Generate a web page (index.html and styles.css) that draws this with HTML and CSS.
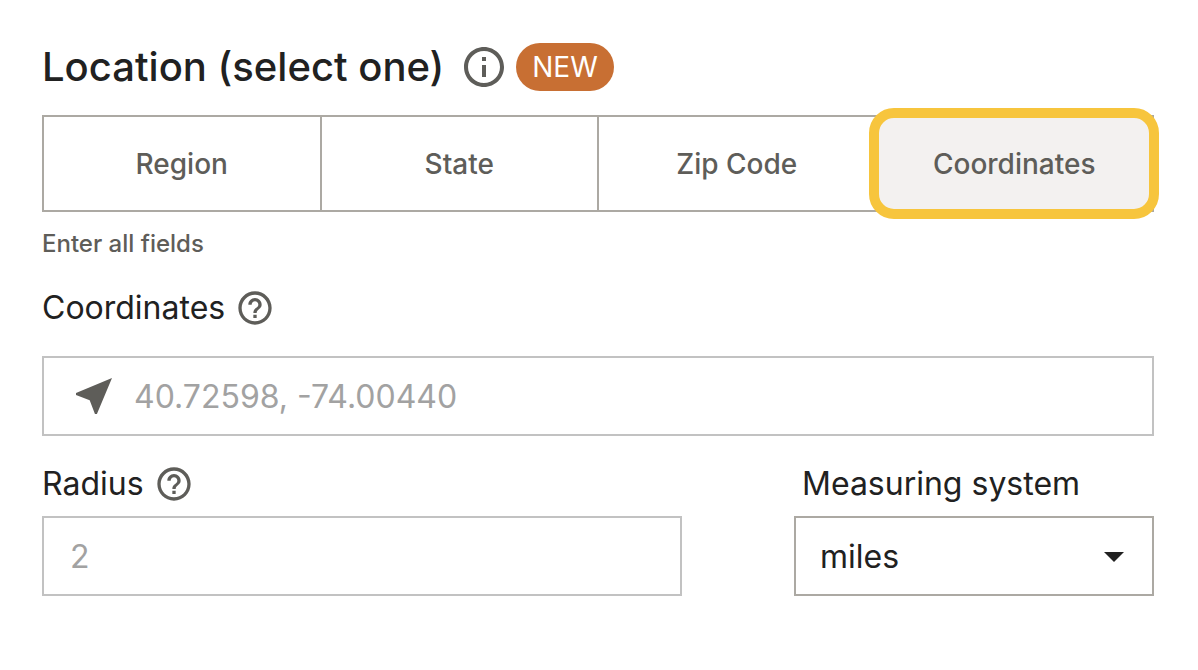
FILE: index.html
```html
<!DOCTYPE html>
<html lang="en">

<head>
    <meta charset="UTF-8">
    <meta name="viewport" content="width=device-width, initial-scale=1.0">
    <title>Location</title>
    <link rel="stylesheet" href="styles.css">
</head>

<body>
    <form class="location">
        <div class="heading">
            <h2 class="title">Location (select one)</h2>
            <button type="button" class="icon-btn" aria-label="About location">
                <svg class="icon icon-large" viewBox="0 0 24 24">
                    <path d="M11 7h2v2h-2zm0 4h2v6h-2zm1-9C6.48 2 2 6.48 2 12s4.48 10 10 10 10-4.48 10-10S17.52 2 12 2zm0 18c-4.41 0-8-3.59-8-8s3.59-8 8-8 8 3.59 8 8-3.59 8-8 8z"/>
                </svg>
            </button>
            <span class="badge">NEW</span>
        </div>

        <div class="tabs">
            <button type="button" class="tab">Region</button>
            <button type="button" class="tab">State</button>
            <button type="button" class="tab">Zip Code</button>
            <button type="button" class="tab active">Coordinates</button>
        </div>
        <p class="hint">Enter all fields</p>

        <div class="field coordinates">
            <div class="label-row">
                <label for="coordinates">Coordinates</label>
                <button type="button" class="icon-btn" aria-label="Help with coordinates">
                    <svg class="icon" viewBox="0 0 24 24">
                        <path d="M11 18h2v-2h-2v2zm1-16C6.48 2 2 6.48 2 12s4.48 10 10 10 10-4.48 10-10S17.52 2 12 2zm0 18c-4.41 0-8-3.59-8-8s3.59-8 8-8 8 3.59 8 8-3.59 8-8 8zm0-14c-2.21 0-4 1.79-4 4h2c0-1.1.9-2 2-2s2 .9 2 2c0 2-3 1.75-3 5h2c0-2.25 3-2.5 3-5 0-2.21-1.79-4-4-4z"/>
                    </svg>
                </button>
            </div>
            <div class="box">
                <svg class="icon icon-large" viewBox="0 0 24 24">
                    <path d="M21 3L3 10.53v.98l6.84 2.65L12.48 21h.98L21 3z"/>
                </svg>
                <input type="text" id="coordinates" placeholder="40.72598, -74.00440">
            </div>
        </div>

        <div class="row">
            <div class="field radius">
                <div class="label-row">
                    <label for="radius">Radius</label>
                    <button type="button" class="icon-btn" aria-label="Help with radius">
                        <svg class="icon" viewBox="0 0 24 24">
                            <path d="M11 18h2v-2h-2v2zm1-16C6.48 2 2 6.48 2 12s4.48 10 10 10 10-4.48 10-10S17.52 2 12 2zm0 18c-4.41 0-8-3.59-8-8s3.59-8 8-8 8 3.59 8 8-3.59 8-8 8zm0-14c-2.21 0-4 1.79-4 4h2c0-1.1.9-2 2-2s2 .9 2 2c0 2-3 1.75-3 5h2c0-2.25 3-2.5 3-5 0-2.21-1.79-4-4-4z"/>
                        </svg>
                    </button>
                </div>
                <div class="box">
                    <input type="text" id="radius" placeholder="2">
                </div>
            </div>
            <div class="field system">
                <div class="label-row">
                    <label for="system">Measuring system</label>
                </div>
                <div class="box select-box">
                    <select id="system">
                        <option>miles</option>
                        <option>kilometers</option>
                    </select>
                    <svg class="icon icon-large arrow" viewBox="0 0 24 24">
                        <path d="M7 10l5 5 5-5z"/>
                    </svg>
                </div>
            </div>
        </div>
    </form>
</body>

</html>
```

FILE: styles.css
```css
*{
    margin: 0;
    padding: 0;
    box-sizing: border-box;
}
body{
    background-color: #fff;
    color: #212121;
    font-family: Inter, "Liberation Sans", sans-serif;
    font-optical-sizing: none;
}
button, input, select{
    font: inherit;
    font-optical-sizing: none;
    color: inherit;
    background: none;
    border: none;
}
.location{
    padding: 43px 44px 43px 42px;
}
.heading{
    display: flex;
    align-items: center;
    gap: 8px;
    margin-bottom: 24px;
}
.title{
    padding-right: 8px;
    font-size: 40px;
    line-height: 48px;
    font-weight: 500;
}
.icon-btn{
    display: flex;
    cursor: pointer;
}
.icon{
    width: 40px;
    height: 40px;
    flex-shrink: 0;
    fill: #5e5d59;
}
.icon-large{
    width: 48px;
    height: 48px;
}
.badge{
    padding: 0 16px;
    border-radius: 24px;
    background-color: #c86f33;
    color: #fff;
    font-size: 28px;
    line-height: 48px;
}

/* tabs */
.tabs{
    display: flex;
    border: 2px solid #aca9a3;
    border-left: none;
}
.tab{
    flex: 1;
    height: 93px;
    border-left: 2px solid #aca9a3;
    color: #5e5d59;
    font-size: 28px;
    font-weight: 500;
    cursor: pointer;
}
.tab.active{
    position: relative;
    background-color: #f3f1f0;
}
.tab.active::after{
    content: "";
    position: absolute;
    inset: -9px -7px -9px -8px;
    border: 10px solid #f7c53d;
    border-radius: 25px;
}
.hint{
    margin: 16px 0 24px;
    color: #5e5d59;
    font-size: 24px;
    line-height: 32px;
    font-weight: 500;
}

/* fields */
.label-row{
    display: flex;
    align-items: center;
    gap: 10px;
    margin-bottom: 8px;
    font-size: 32px;
    line-height: 48px;
}
.box{
    display: flex;
    align-items: center;
    gap: 16px;
    height: 80px;
    padding: 0 26px;
    border: 2px solid #c2c2c2;
    font-size: 32px;
}
.box input{
    flex: 1;
    min-width: 0;
    height: 100%;
    outline: none;
}
.box input::placeholder{
    color: #a2a2a2;
}
.coordinates .label-row{
    margin-bottom: 24px;
}
.row{
    display: flex;
    gap: 112px;
    margin-top: 24px;
}
.radius{
    flex: 16;
}
.system{
    flex: 9;
}
.system .label-row{
    padding-left: 8px;
}
.select-box{
    position: relative;
    padding: 0;
    border-color: #aca9a3;
}
.select-box select{
    width: 100%;
    height: 100%;
    padding: 0 64px 0 24px;
    appearance: none;
    cursor: pointer;
}
.arrow{
    position: absolute;
    right: 14px;
    fill: #212121;
    pointer-events: none;
}
```
